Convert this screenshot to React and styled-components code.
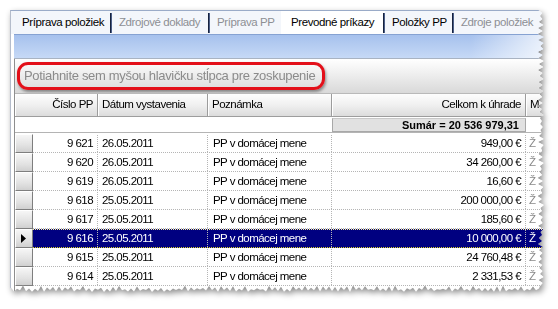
import styled, { createGlobalStyle } from 'styled-components';

const GlobalStyle = createGlobalStyle`
  body {
    margin: 0;
    background: #fff;
    font-family: "Liberation Sans", Arial, sans-serif;
  }
`;

// torn paper edge along the right and bottom side
const WIN_W = 535;
const WIN_H = 283;
const tornEdge = (() => {
  let seed = 7;
  const rnd = () => {
    seed = (seed * 16807) % 2147483647;
    return (seed % 1000) / 1000;
  };
  const pts = ['0px 0px'];
  let i = 0;
  for (let y = 0; y < WIN_H - 6; y += 3, i++) {
    const d = i % 2 ? 1 + rnd() * 2.5 : 4 + rnd() * 4;
    pts.push(`${(WIN_W - d).toFixed(1)}px ${y}px`);
  }
  i = 0;
  for (let x = WIN_W - 6; x > 0; x -= 3, i++) {
    const d = i % 2 ? 1 + rnd() * 2.5 : 3.5 + rnd() * 4;
    pts.push(`${x}px ${(WIN_H - d).toFixed(1)}px`);
  }
  pts.push(`0px ${WIN_H - 4}px`);
  return `polygon(${pts.join(', ')})`;
})();

const tabs = [
  { label: 'Príprava položiek', w: 99, pl: 11, sep: true },
  { label: 'Zdrojové doklady', w: 96, pl: 7, sep: true, dim: true },
  { label: 'Príprava PP', w: 71, pl: 7, dim: true },
  { label: 'Prevodné príkazy', w: 102, pl: 10, sep: true, active: true },
  { label: 'Položky PP', w: 67, pl: 7, sep: true },
  { label: 'Zdroje položiek', w: 100, pl: 7, dim: true },
];

const rows = [
  ['9 621', '26.05.2011', '949,00 €'],
  ['9 620', '26.05.2011', '34 260,00 €'],
  ['9 619', '26.05.2011', '16,60 €'],
  ['9 618', '25.05.2011', '200 000,00 €'],
  ['9 617', '25.05.2011', '185,60 €'],
  ['9 616', '25.05.2011', '10 000,00 €'],
  ['9 615', '25.05.2011', '24 760,48 €'],
  ['9 614', '25.05.2011', '2 331,53 €'],
];
const SELECTED = 5;

const Page = styled.div`
  width: 558px;
  height: 309px;
  padding: 10px 0 0 10px;
  box-sizing: border-box;
  overflow: hidden;
`;

const Shadow = styled.div`
  width: ${WIN_W}px;
  height: ${WIN_H}px;
  filter: drop-shadow(2px 3px 3px rgba(0, 0, 0, 0.45));
`;

const Window = styled.div`
  width: 100%;
  height: 100%;
  box-sizing: border-box;
  background: #fff;
  border-top: 1px solid #9aabc8;
  border-left: 1px solid #b4bccb;
  overflow: hidden;
  clip-path: ${tornEdge};
  display: flex;
  flex-direction: column;
  color: #000;
`;

const TabStrip = styled.div`
  display: flex;
  height: 23px;
  flex-shrink: 0;
  background: #f3f6fb;
`;

const Tab = styled.div`
  display: flex;
  align-items: stretch;
  flex-shrink: 0;
  width: ${(p) => p.$w}px;
  background: ${(p) => (p.$active ? '#fff' : 'transparent')};
  font-size: 11.5px;
  letter-spacing: -0.4px;
  color: ${(p) => (p.$dim ? '#8d8f94' : '#000')};
  span {
    flex: 1;
    padding-left: ${(p) => p.$pl}px;
    line-height: 22px;
    white-space: nowrap;
  }
`;

const TabSep = styled.i`
  width: 2px;
  margin: 2px 0 1px;
  background: linear-gradient(to right, #16223e 50%, #4a5d86 50%);
`;

const Body = styled.div`
  flex: 1;
  display: flex;
  flex-direction: column;
  padding-left: 3px;
  min-height: 0;
`;

const BlueBar = styled.div`
  height: 23px;
  flex-shrink: 0;
  border-top: 1px solid #86a2d2;
  border-bottom: 1px solid #a9b3c2;
  background: linear-gradient(to right, rgba(255, 255, 255, 0) 86%, rgba(255, 255, 255, 0.75)),
    linear-gradient(#a6c1ed, #c6d9f6);
`;

const Grid = styled.div`
  flex: 1;
  display: flex;
  flex-direction: column;
  border-left: 1px solid #8e8e8e;
  min-height: 0;
`;

const GroupPanel = styled.div`
  height: 34px;
  flex-shrink: 0;
  display: flex;
  align-items: center;
  padding-left: 2px;
  background: linear-gradient(#ffffff, #f2f2f2 35%, #d9d9d9);
`;

const GroupHint = styled.div`
  width: 298px;
  height: 22px;
  border: 3px solid #e3101a;
  border-radius: 11px;
  box-shadow: 1px 2px 3px rgba(0, 0, 0, 0.4);
  padding-left: 4px;
  font-size: 13px;
  letter-spacing: -0.32px;
  line-height: 22px;
  color: #8b8b8b;
  white-space: nowrap;
  overflow: hidden;
`;

const HeaderRow = styled.div`
  display: flex;
  height: 22px;
  flex-shrink: 0;
  border-top: 1px solid #b9b9b9;
  border-bottom: 1px solid #9d9d9d;
  background: linear-gradient(#fdfdfd, #f0f0f0 50%, #dcdcdc);
`;

const HeadCell = styled.div`
  width: ${(p) => p.$w}px;
  flex-shrink: 0;
  box-sizing: border-box;
  padding: 0 ${(p) => (p.$right ? 4 : 0)}px 0 ${(p) => (p.$right ? 0 : 4)}px;
  text-align: ${(p) => (p.$right ? 'right' : 'left')};
  line-height: 21px;
  font-size: 11.5px;
  letter-spacing: -0.5px;
  white-space: nowrap;
  border-right: 1px solid #9c9c9c;
  box-shadow: inset 1px 0 #ffffff;
`;

const SumRow = styled.div`
  display: flex;
  height: 15px;
  flex-shrink: 0;
  border-bottom: 1px solid #b4b4b4;
  margin-bottom: 1px;
`;

const SumSpacer = styled.div`
  width: ${(p) => p.$w}px;
  flex-shrink: 0;
`;

const SumCell = styled.div`
  width: 194px;
  flex-shrink: 0;
  box-sizing: border-box;
  margin-top: 1px;
  background: #e1e1e1;
  border: 1px solid #a8a8a8;
  border-top-color: #c8c8c8;
  text-align: right;
  padding-right: 6px;
  font-size: 11px;
  font-weight: bold;
  line-height: 12px;
  white-space: nowrap;
`;

const Row = styled.div`
  display: flex;
  height: 19px;
  flex-shrink: 0;
`;

const Indicator = styled.div`
  width: 18px;
  flex-shrink: 0;
  box-sizing: border-box;
  display: flex;
  align-items: center;
  padding-left: 5px;
  background: linear-gradient(#f6f6f6, #e2e2e2 60%, #d0d0d0);
  border-top: 1px solid #fff;
  border-left: 1px solid #fff;
  border-right: 1px solid #7e7e7e;
  border-bottom: 1px solid #7e7e7e;
`;

const Cells = styled.div`
  flex: 1;
  display: flex;
  box-sizing: border-box;
  background: ${(p) => (p.$sel ? '#000080' : '#fff')};
  color: ${(p) => (p.$sel ? '#fff' : '#000')};
  border-top: 1px dotted ${(p) => (p.$sel ? '#fff59a' : 'transparent')};
  border-bottom: 1px dotted ${(p) => (p.$sel ? '#d8cc2a' : '#b5b5b5')};
`;

const Cell = styled.div`
  width: ${(p) => p.$w}px;
  flex-shrink: 0;
  box-sizing: border-box;
  padding: 0 ${(p) => (p.$right ? 4 : 2)}px 0 ${(p) => (p.$right ? 0 : p.$pl || 4)}px;
  text-align: ${(p) => (p.$right ? 'right' : 'left')};
  border-right: 1px dotted #b5b5b5;
  font-size: 11.5px;
  letter-spacing: -0.55px;
  line-height: 17px;
  white-space: nowrap;
  overflow: hidden;
  color: ${(p) => (p.$muted ? '#8a8a8a' : 'inherit')};
`;

const Pointer = () => (
  <svg width="5" height="9" viewBox="0 0 5 9">
    <polygon points="0,0 5,4.5 0,9" fill="#000" />
  </svg>
);

export default function App() {
  return (
    <Page>
      <GlobalStyle />
      <Shadow>
        <Window>
          <TabStrip>
            {tabs.map((t) => (
              <Tab key={t.label} $w={t.w + (t.sep ? 2 : 0)} $pl={t.pl} $dim={t.dim} $active={t.active}>
                <span>{t.label}</span>
                {t.sep && <TabSep />}
              </Tab>
            ))}
          </TabStrip>
          <Body>
            <BlueBar />
            <Grid>
              <GroupPanel>
                <GroupHint>Potiahnite sem myšou hlavičku stĺpca pre zoskupenie</GroupHint>
              </GroupPanel>
              <HeaderRow>
                <HeadCell $w={83} $right>Číslo PP</HeadCell>
                <HeadCell $w={110}>Dátum vystavenia</HeadCell>
                <HeadCell $w={124}>Poznámka</HeadCell>
                <HeadCell $w={194} $right>Celkom k úhrade</HeadCell>
                <HeadCell $w={60}>M</HeadCell>
              </HeaderRow>
              <SumRow>
                <SumSpacer $w={317} />
                <SumCell>Sumár = 20 536 979,31</SumCell>
              </SumRow>
              {rows.map(([num, date, amount], i) => (
                <Row key={num}>
                  <Indicator>{i === SELECTED && <Pointer />}</Indicator>
                  <Cells $sel={i === SELECTED}>
                    <Cell $w={65} $right>{num}</Cell>
                    <Cell $w={110}>{date}</Cell>
                    <Cell $w={124} $pl={5}>PP v domácej mene</Cell>
                    <Cell $w={194} $right>{amount}</Cell>
                    <Cell $w={60} $pl={3} $muted={i !== SELECTED}>Ž</Cell>
                  </Cells>
                </Row>
              ))}
            </Grid>
          </Body>
        </Window>
      </Shadow>
    </Page>
  );
}
